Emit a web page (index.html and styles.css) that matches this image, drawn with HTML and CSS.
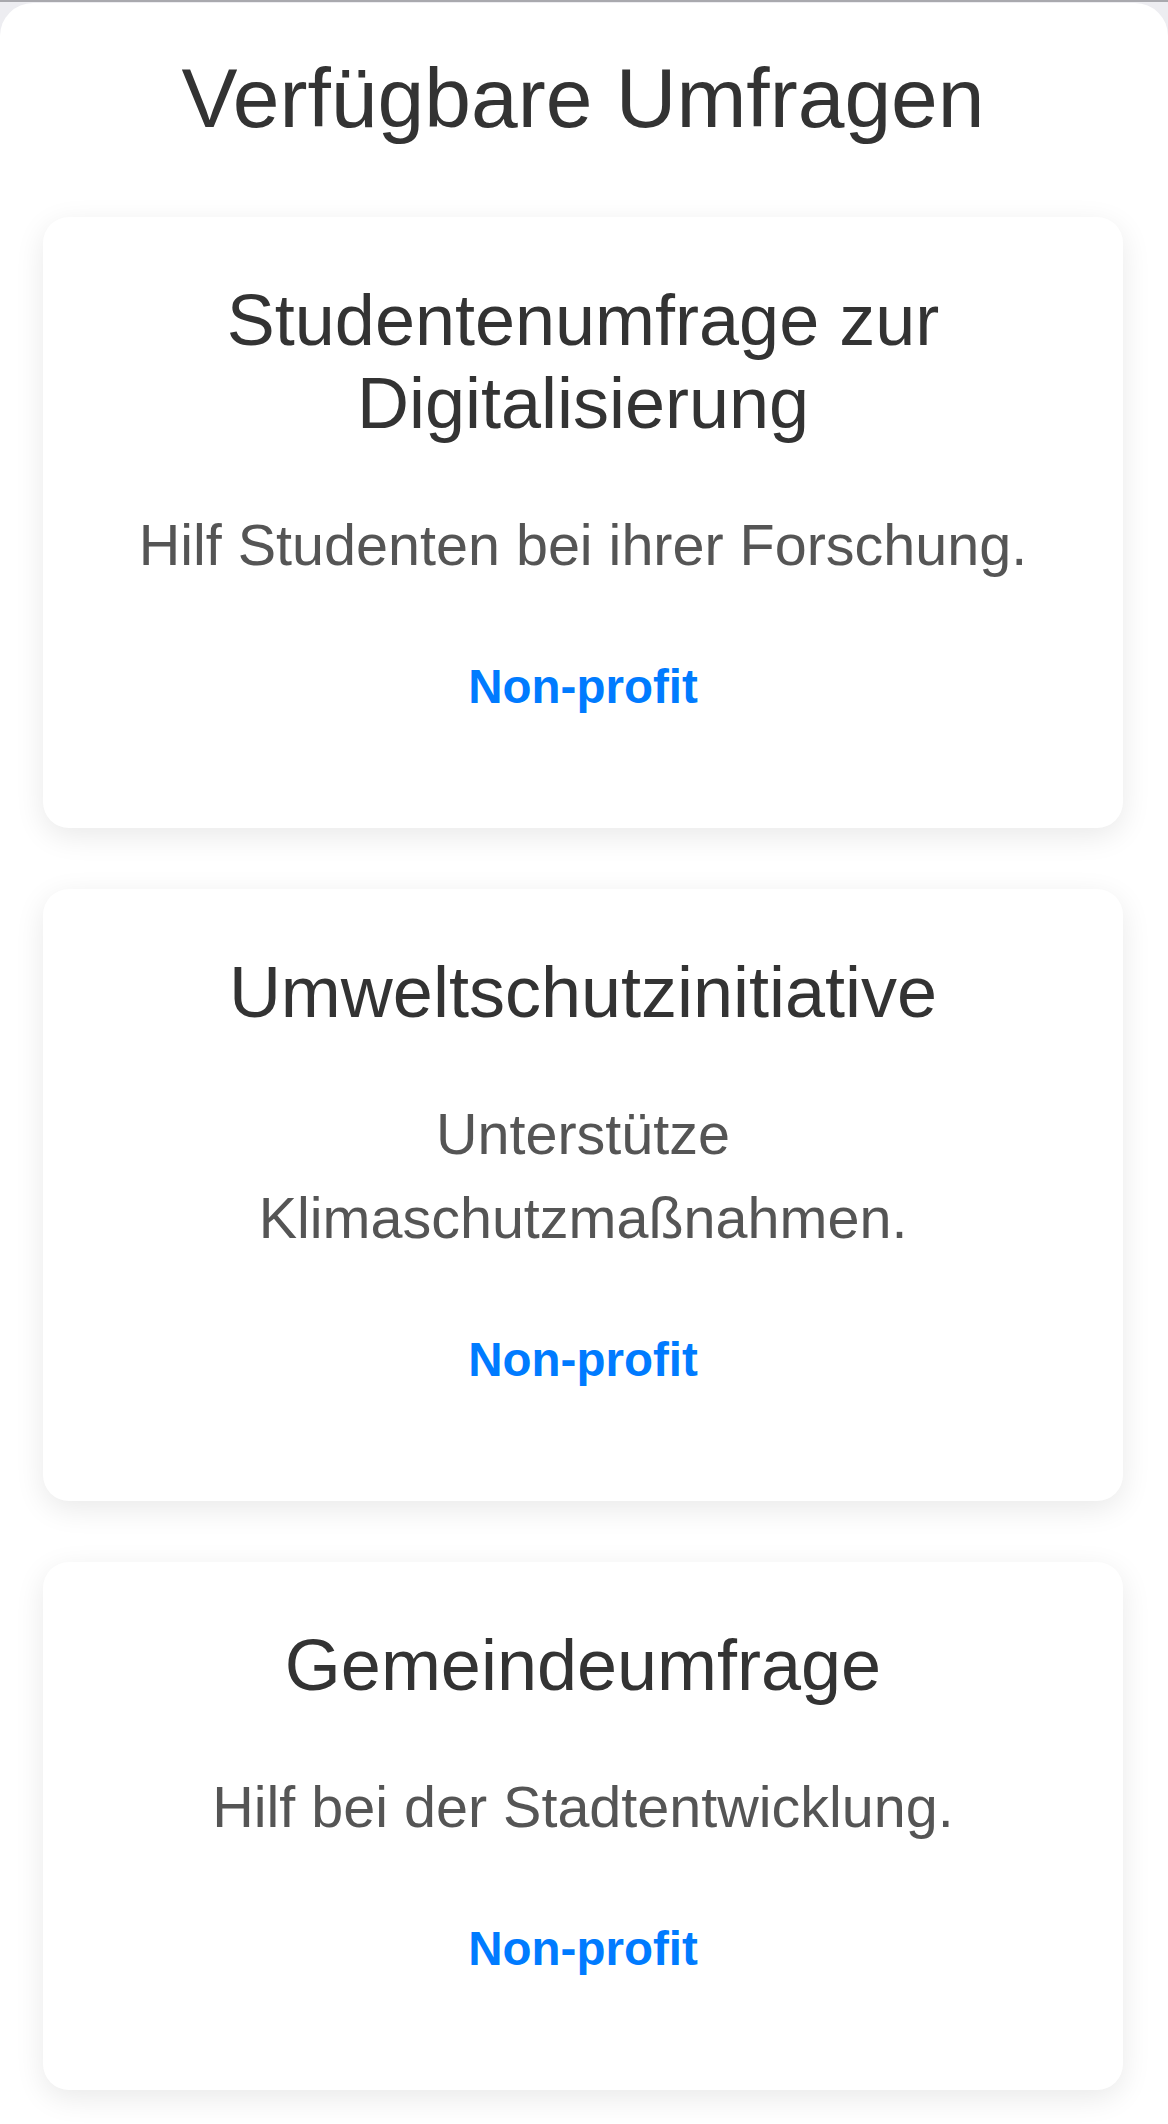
FILE: index.html
```html
<!DOCTYPE html>
<html lang="de">
<head>
    <meta charset="UTF-8">
    <meta name="viewport" content="width=device-width, initial-scale=1.0">
    <title>Verfügbare Umfragen</title>
    <link rel="stylesheet" href="styles.css">
</head>
<body>
    <div class="sheet">
        <h1>Verfügbare Umfragen</h1>
        <div class="survey-list">
            <div class="survey-card">
                <h2>Studentenumfrage zur Digitalisierung</h2>
                <p>Hilf Studenten bei ihrer Forschung.</p>
                <span class="tag">Non-profit</span>
            </div>
            <div class="survey-card">
                <h2>Umweltschutzinitiative</h2>
                <p>Unterstütze Klimaschutzmaßnahmen.</p>
                <span class="tag">Non-profit</span>
            </div>
            <div class="survey-card">
                <h2>Gemeindeumfrage</h2>
                <p>Hilf bei der Stadtentwicklung.</p>
                <span class="tag">Non-profit</span>
            </div>
        </div>
    </div>
</body>
</html>
```

FILE: styles.css
```css
/* page layout */
body {
    margin: 0;
    border-top: 2px solid #a9a9ae;
    background-color: #ededf1;
    font-family: "Liberation Sans", Arial, sans-serif;
}

.sheet {
    box-sizing: border-box;
    margin-top: 1px;
    min-height: calc(100vh - 3px);
    padding: 0 45px 30px 43px;
    background-color: #fff;
    border-radius: 33px 33px 0 0;
}

h1 {
    margin: 0;
    padding-top: 47px;
    font-size: 84px;
    line-height: 96px;
    font-weight: normal;
    color: #333;
    text-align: center;
}

/* survey cards */
.survey-list {
    display: flex;
    flex-direction: column;
    gap: 61px;
    margin-top: 71px;
}

.survey-card {
    display: flex;
    flex-direction: column;
    align-items: center;
    padding: 62px 78px 114px;
    background-color: #fff;
    border-radius: 26px;
    box-shadow: 0 8px 30px rgba(0, 0, 0, 0.09);
    text-align: center;
}

.survey-card h2 {
    margin: 0 0 58px;
    font-size: 72px;
    line-height: 83px;
    font-weight: normal;
    color: #333;
}

.survey-card p {
    margin: 0 0 73px;
    font-size: 57.5px;
    line-height: 84px;
    color: #555;
}

.tag {
    font-size: 47.5px;
    line-height: 54px;
    font-weight: bold;
    color: #007bff;
}
```
